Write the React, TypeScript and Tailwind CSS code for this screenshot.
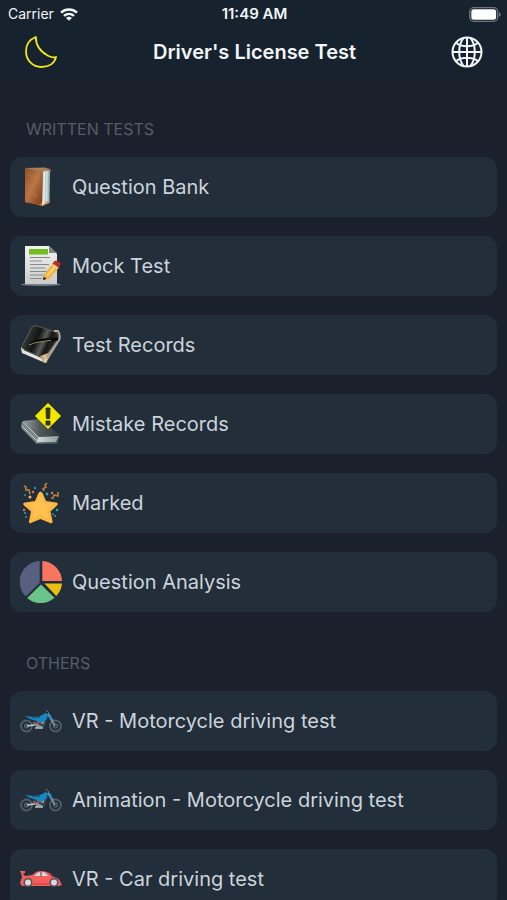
import type { ReactNode } from "react";

function MoonIcon() {
  return (
    <svg viewBox="0 0 34 34" className="size-[34px]" fill="none" stroke="#f0ea1c" strokeWidth="1.8" strokeLinejoin="round" aria-hidden="true">
      <path d="M11.800 2C5.500 4.500 2 10 2 16.200C2 25 8.600 32 17.300 32C24.500 32 30.500 28.500 32 22C29 23 26.500 22 24 20.700C16 16.500 11.800 10.500 11.800 2Z" />
    </svg>
  );
}

function GlobeIcon() {
  return (
    <svg viewBox="0 0 32 32" className="size-8" fill="none" stroke="#f3f6f8" strokeWidth="2" aria-hidden="true">
      <circle cx="16" cy="16" r="14.500" />
      <path d="M16 1.400V30.600M1.400 16H30.600M5 6.800C8 9.300 12 10.300 16 10.300S24 9.300 27 6.800M5 25.200C8 22.700 12 21.700 16 21.700S24 22.700 27 25.200" />
      <path d="M12.800 1.700C6.700 9 6.700 23 12.800 30.300M19.200 1.700C25.300 9 25.300 23 19.200 30.300" />
    </svg>
  );
}

function WifiIcon() {
  return (
    <svg viewBox="0 0 18 13" className="h-[13px] w-[18px]" fill="none" stroke="#f3f6f8" strokeWidth="2.500" aria-hidden="true">
      <path d="M1 4.600C5.500.4 12.500.4 17 4.600M4 7.900C7 5.200 11 5.200 14 7.900" />
      <path d="M9 12.700L6 9.900C7.800 8.400 10.200 8.400 12 9.900Z" fill="#f3f6f8" stroke="none" />
    </svg>
  );
}

function BatteryIcon() {
  return (
    <svg viewBox="0 0 32 15" className="h-[15px] w-8" aria-hidden="true">
      <rect x=".7" y=".7" width="28" height="13.600" rx="4" fill="none" stroke="#6d7680" strokeWidth="1.300" />
      <rect x="2.300" y="2.300" width="24.800" height="10.400" rx="2.500" fill="#fff" />
      <path d="M30 5.200Q31.800 6 31.800 7.500T30 9.800Z" fill="#6d7680" />
    </svg>
  );
}

function BookIcon() {
  return (
    <svg viewBox="0 0 42 42" className="size-[42px]" aria-hidden="true">
      <defs>
        <linearGradient id="leather" x1="0" y1="0" x2="1" y2="1">
          <stop offset="0" stopColor="#8d4f2b" />
          <stop offset=".45" stopColor="#b87445" />
          <stop offset="1" stopColor="#783713" />
        </linearGradient>
        <linearGradient id="pages" x1="0" x2="1">
          <stop offset="0" stopColor="#dce9e8" />
          <stop offset="1" stopColor="#93aaa9" />
        </linearGradient>
      </defs>
      <path d="M5 2L25 1.500L31 3.500L23 6Z" fill="#a9825a" />
      <path d="M5 2L23 5.500L22 40L5 36Z" fill="url(#leather)" />
      <path d="M23 5.500L30 4L29.500 36L22 40Z" fill="url(#pages)" />
      <path d="M24.500 6L24 38M27 5L26.700 37" stroke="#f5f6ec" strokeWidth=".8" />
      <path d="M9 9Q18 13 14 20T18 31M8 24Q11 21 9 17M17 8Q20 12 18 16" fill="none" stroke="#c0824f" strokeWidth=".6" />
      <path d="M5 2L8 2.500L5 6ZM28 2.500L31 3V6Z" fill="#a9492e" />
      <path d="M5 33L8 37L5 36ZM18 39L22 36V40Z" fill="#d85a32" />
      <path d="M22 40L26 36L29.500 34V37Z" fill="#c79a4f" />
    </svg>
  );
}

function SheetIcon() {
  return (
    <svg viewBox="0 0 42 42" className="size-[42px]" aria-hidden="true">
      <defs>
        <linearGradient id="sheet" x1="0" y1="0" x2="0" y2="1">
          <stop offset="0" stopColor="#f4f4f2" />
          <stop offset="1" stopColor="#c8cbca" />
        </linearGradient>
      </defs>
      <ellipse cx="21" cy="39.500" rx="20" ry="1.500" fill="#778087" />
      <path d="M5 1H29L37 9V39H5Z" fill="url(#sheet)" />
      <path d="M29 1V8H37Z" fill="#7d8484" />
      <path d="M9 4H28V9.500H9Z" fill="#72bd24" />
      <path d="M10 12.500H30M10 16H22M10 19.500H29M10 23H25M10 26.500H29M10 30H24M10 33.500H22" stroke="#858b8c" strokeWidth="1.200" />
      <path d="M23 35L24.500 29L32.500 18.500L39 22.500L30 33.200Z" fill="#f0b43f" />
      <path d="M27 31L36 20.500" stroke="#ffd876" strokeWidth="2" />
      <path d="M32.500 18.500L34.500 16Q38 15 41 18.500L39 22.500Z" fill="#b72c25" />
      <path d="M31.500 20L38 24" stroke="#d8d8c7" strokeWidth="1" />
      <path d="M23 35L23.700 31.500L26.500 34Z" fill="#222" />
    </svg>
  );
}

function NotebookIcon() {
  return (
    <svg viewBox="0 0 42 42" className="size-[42px]" aria-hidden="true">
      <defs>
        <linearGradient id="cover" x1="0" y1=".3" x2="1" y2=".7">
          <stop offset="0" stopColor="#464746" />
          <stop offset=".4" stopColor="#111414" />
          <stop offset=".58" stopColor="#5b5b57" />
          <stop offset=".7" stopColor="#151818" />
          <stop offset="1" stopColor="#3c3c3b" />
        </linearGradient>
      </defs>
      <path d="M1 25L22 34L23 38L2 29Z" fill="#e5e4de" />
      <path d="M22 34L38 13L39 18L26 39Z" fill="#a9a198" />
      <path d="M1 24L12 3Q14 1 17 2L36 8Q39 10 38 15L24 35Z" fill="url(#cover)" stroke="#68665f" strokeWidth=".8" />
      <path d="M11 20Q21 15 31 16L38 15" fill="none" stroke="#060807" strokeWidth="3" />
      <path d="M9 21L16 18.500L31 16.300" fill="none" stroke="#9b8c6e" strokeWidth="1" />
      <path d="M34 7L38 7Q41 11 39 17" fill="none" stroke="#b9aaa0" strokeWidth="1.800" />
      <path d="M20 32L28 29L27 37L22 36Z" fill="#c6a77a" />
      <circle cx="25" cy="37" r="2" fill="#e0c69c" />
      <path d="M1 24L4 26M24 31L27 36" stroke="#f3e6cf" />
    </svg>
  );
}

function MistakeIcon() {
  return (
    <svg viewBox="0 0 42 42" className="size-[42px]" aria-hidden="true">
      <defs>
        <linearGradient id="volume" x1="0" x2="1">
          <stop offset="0" stopColor="#9aa2a4" />
          <stop offset=".45" stopColor="#50585c" />
          <stop offset="1" stopColor="#30383d" />
        </linearGradient>
        <linearGradient id="volumePages" x1="0" x2="1">
          <stop offset="0" stopColor="#d4dddb" />
          <stop offset="1" stopColor="#8e9c9d" />
        </linearGradient>
      </defs>
      <path d="M3 18L20 16L40 32L18 34Z" fill="url(#volume)" />
      <path d="M3 18Q0 21 2 26L16 40L18 34Z" fill="#7b8586" />
      <path d="M3 19L18 34M2 23L16 37" stroke="#c2caca" strokeWidth="1" />
      <path d="M18 34L39 33L36 39L16 40Z" fill="url(#volumePages)" />
      <path d="M40 31L37 40.500L15.500 41V39.500L36 39Z" fill="#596568" />
      <path d="M28 0L41 13L28 26L15 13Z" fill="#f4e700" stroke="#a9a30c" strokeWidth=".7" />
      <path d="M26 5H30L29.600 15.500H26.400ZM26 18H30V22H26Z" fill="#32351c" stroke="#32351c" strokeLinejoin="round" />
    </svg>
  );
}

function StarIcon() {
  return (
    <svg viewBox="0 0 42 42" className="size-[42px]" aria-hidden="true">
      <path d="M20.500 9.500Q22 9.500 23 12L26 19L36 20.500Q39 21 37 23.500L30.500 29.500L32.500 39Q33 42 30 41L20.500 37L11 41Q8.500 42 9 39L11 29.500L4 23.500Q2 21 5 20.500L15 19L18 12Q19 9.500 20.500 9.500Z" fill="#ffb640" />
      <path d="M20.500 12L24 21L34 22L27 28.500L29 38L20.500 33L12 38L14 28.500L7 22L17 21Z" fill="#ffc250" />
      <g fill="none" stroke="#c78032" strokeWidth="1.600">
        <path d="M4 4L6 5L6 8L9 8L10 12M27 1L25 3L26 5L23 7L24 9M38 10L38 14L34 13L33 16L31 16" />
      </g>
      <g fill="#3689c4"><circle cx="15" cy="6" r="1.200" /><circle cx="5" cy="13" r="1" /><circle cx="6" cy="35" r="1" /><circle cx="33" cy="32" r="1" /></g>
      <g fill="#18b9a3"><circle cx="27" cy="12" r="1.400" /><circle cx="37" cy="28" r="1.300" /><circle cx="5" cy="31" r="1" /><circle cx="35" cy="34" r="1" /></g>
      <g fill="#e77162"><circle cx="13" cy="10" r="1.200" /><circle cx="32" cy="11" r="1.200" /><circle cx="4" cy="28" r="1.200" /></g>
      <circle cx="10" cy="15" r="1.500" fill="#f4b850" />
    </svg>
  );
}

function PieIcon() {
  return (
    <svg viewBox="0 0 42 42" className="size-[42px]" aria-hidden="true">
      <path d="M19.700 0V21.800L5.800 35.500A20.800 20.800 0 0 1 19.700 0Z" fill="#566081" />
      <path d="M22.300 0A20.800 20.800 0 0 1 42 20H22.300Z" fill="#f87660" />
      <path d="M24.500 22.500H42A20 20 0 0 1 36.200 35Z" fill="#e9c011" />
      <path d="M21 23.500L34.500 36.800A20.500 20.500 0 0 1 7.200 37Z" fill="#6ac389" />
    </svg>
  );
}

function MotorcycleIcon() {
  return (
    <svg viewBox="0 0 42 24" className="h-6 w-[42px]" aria-hidden="true">
      <g fill="none" stroke="#505d66" strokeWidth="1.900">
        <circle cx="6.500" cy="17" r="5.500" />
        <circle cx="35.500" cy="17" r="5.500" />
      </g>
      <g fill="none" stroke="#7d888d" strokeWidth=".8">
        <circle cx="6.500" cy="17" r="2" />
        <circle cx="35.500" cy="17" r="2" />
        <path d="M26 1L29 4L27 6M6 17L18 14" />
      </g>
      <path d="M28 5L35 17" stroke="#7894a8" strokeWidth="1.800" />
      <path d="M13 13L22 10L26 13L23 18L17 19Z" fill="#8d9799" />
      <path d="M14 12L24 17L27 8" fill="none" stroke="#343f48" strokeWidth="2" />
      <path d="M7 17L15 16M15 19H23" stroke="#b7c2c7" strokeWidth="1.600" />
      <path d="M5 7L14 8L20 7L26 4L28 6L26 11L21 14L17 12L10 10Z" fill="#1686c4" />
      <path d="M28 4L31 6L32 9L35 12L30 10Z" fill="#248fca" />
      <path d="M12 8L20 8" stroke="#244961" strokeWidth="1.300" />
      <path d="M14 15L19 14" stroke="#bd524f" strokeWidth="1.500" />
    </svg>
  );
}

function CarIcon() {
  return (
    <svg viewBox="0 0 42 18" className="h-[18px] w-[42px]" aria-hidden="true">
      <path d="M0 1H5V3L3 4L5 6L12 5L17 1.500Q24 0 29 3L34 7Q39 8 40 11L42 15L39 16H2L0 13L2 7L1 3Z" fill="#f45f5c" />
      <path d="M14 6L18 2.500Q22 1.500 25 2.500L28 6Z" fill="#ccdbe4" />
      <path d="M21 2V6.500M29 3L33 7" stroke="#a43f48" strokeWidth="1.200" />
      <path d="M13 14H29" stroke="#d84650" strokeWidth="1.500" />
      <circle cx="8" cy="12.500" r="4.500" fill="#554e59" />
      <circle cx="34" cy="12.500" r="4.500" fill="#554e59" />
      <circle cx="8" cy="12.500" r="3" fill="#d2dce1" />
      <circle cx="34" cy="12.500" r="3" fill="#d2dce1" />
    </svg>
  );
}

type Item = { label: string; icon: ReactNode };

const writtenTests: Item[] = [
  { label: "Question Bank", icon: <BookIcon /> },
  { label: "Mock Test", icon: <SheetIcon /> },
  { label: "Test Records", icon: <NotebookIcon /> },
  { label: "Mistake Records", icon: <MistakeIcon /> },
  { label: "Marked", icon: <StarIcon /> },
  { label: "Question Analysis", icon: <PieIcon /> },
];

const others: Item[] = [
  { label: "VR - Motorcycle driving test", icon: <MotorcycleIcon /> },
  { label: "Animation - Motorcycle driving test", icon: <MotorcycleIcon /> },
  { label: "VR - Car driving test", icon: <CarIcon /> },
];

function Section({ title, items }: { title: string; items: Item[] }) {
  return (
    <section>
      <h2 className="mb-[18px] px-4 text-base leading-5 text-[#565c67]">{title}</h2>
      <ul className="flex flex-col gap-[19px]">
        {items.map((item) => (
          <li key={item.label}>
            <button type="button" className="flex h-[60px] w-full items-center gap-[10px] rounded-xl bg-[#222e3a] px-[10px] text-left text-xl text-[#ccd4db]">
              <span className="flex w-[42px] shrink-0 justify-center">{item.icon}</span>
              {item.label}
            </button>
          </li>
        ))}
      </ul>
    </section>
  );
}

export default function App() {
  return (
    <div className="flex h-screen flex-col overflow-hidden bg-[#1b202d] font-[Inter,sans-serif]">
      <header className="bg-[#16222e] pb-2 text-[#f3f6f8]">
        <div className="grid grid-cols-3 items-center pt-1 pr-[6px] pl-2 text-sm leading-5">
          <div className="flex items-center gap-[6px]">
            <span>Carrier</span>
            <WifiIcon />
          </div>
          <div className="text-center text-[15px] font-semibold">11:49 AM</div>
          <div className="flex justify-end">
            <BatteryIcon />
          </div>
        </div>
        <div className="flex h-12 items-center justify-between px-6 pt-2">
          <button type="button" aria-label="Dark mode">
            <MoonIcon />
          </button>
          <h1 className="text-xl font-semibold">Driver's License Test</h1>
          <button type="button" aria-label="Language">
            <GlobeIcon />
          </button>
        </div>
      </header>
      <main className="flex min-h-0 flex-1 flex-col gap-[41px] overflow-y-auto px-[10px] pt-[39px] [scrollbar-width:none]">
        <Section title="WRITTEN TESTS" items={writtenTests} />
        <Section title="OTHERS" items={others} />
      </main>
    </div>
  );
}
